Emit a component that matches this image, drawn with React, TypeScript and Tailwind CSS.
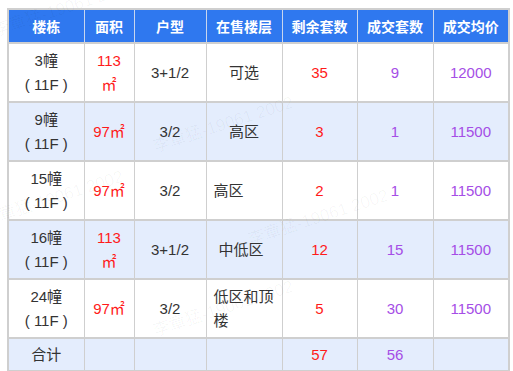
import React from 'react';

type Row = {
  bldg: string;
  area: string[];
  type: string;
  floor: string;
  floorAlign: string;
  left: string;
  deals: string;
  price: string;
  alt: boolean;
};

const rows: Row[] = [
  { bldg: '3幢', area: ['113', '㎡'], type: '3+1/2', floor: '可选', floorAlign: 'text-center', left: '35', deals: '9', price: '12000', alt: false },
  { bldg: '9幢', area: ['97㎡'], type: '3/2', floor: '高区', floorAlign: 'text-center', left: '3', deals: '1', price: '11500', alt: true },
  { bldg: '15幢', area: ['97㎡'], type: '3/2', floor: '高区', floorAlign: 'text-left pl-[7px]', left: '2', deals: '1', price: '11500', alt: false },
  { bldg: '16幢', area: ['113', '㎡'], type: '3+1/2', floor: '中低区', floorAlign: 'text-left pl-[12px]', left: '12', deals: '15', price: '11500', alt: true },
  { bldg: '24幢', area: ['97㎡'], type: '3/2', floor: '低区和顶楼', floorAlign: 'text-left pl-[7px] pr-[4px]', left: '5', deals: '30', price: '11500', alt: false },
];

const headers = ['楼栋', '面积', '户型', '在售楼层', '剩余套数', '成交套数', '成交均价'];
const widths = ['w-[76px]', 'w-[50px]', 'w-[72px]', 'w-[76px]', 'w-[75px]', 'w-[76px]', 'w-[76px]'];

// faint watermark that lies over the table
const marks = [
  'left-[-10px] top-[-4px]',
  'left-[150px] top-[112px]',
  'left-[-20px] top-[186px]',
  'left-[245px] top-[205px]',
  'left-[150px] top-[296px]',
];

export default function App() {
  const cell = 'border-x border-y-2 border-[#cfcfcf] align-middle';
  return (
    <div className="relative w-[513px] h-[371px] bg-white overflow-hidden" style={{ fontFamily: '"Liberation Sans", "Noto Sans CJK SC", sans-serif' }}>
      <div className="pt-[8px] pl-[7px]">
        <table className="table-fixed border-collapse border-2 border-[#cfcfcf] text-[15px] leading-[24px] text-[#333]">
          <colgroup>
            {widths.map((w, i) => (
              <col key={i} className={w} />
            ))}
          </colgroup>
          <thead>
            <tr className="h-[34px] bg-[#2f78ef]">
              {headers.map(h => (
                <th key={h} className="border-x border-[#c9d6ee] text-[14px] font-bold text-white text-center" style={{ fontFamily: '"Noto Sans CJK SC", sans-serif' }}>
                  {h}
                </th>
              ))}
            </tr>
          </thead>
          <tbody>
            {rows.map(r => (
              <tr key={r.bldg} className={r.alt ? 'h-[59px] bg-[#e4edfd]' : 'h-[59px] bg-white'}>
                <td className={`${cell} text-center`}>
                  <div>{r.bldg}</div>
                  <div className="whitespace-pre">( 11F )</div>
                </td>
                <td className={`${cell} text-center text-[#ff1a1a]`}>
                  {r.area.map(a => (
                    <div key={a}>{a}</div>
                  ))}
                </td>
                <td className={`${cell} text-center`}>{r.type}</td>
                <td className={`${cell} ${r.floorAlign}`}>{r.floor}</td>
                <td className={`${cell} text-center text-[#ff1a1a]`}>{r.left}</td>
                <td className={`${cell} text-center text-[#a54ee6]`}>{r.deals}</td>
                <td className={`${cell} text-center text-[#a54ee6]`}>{r.price}</td>
              </tr>
            ))}
            <tr className="h-[33px] bg-[#e4edfd]">
              <td className={`${cell} text-center`}>合计</td>
              <td className={cell}></td>
              <td className={cell}></td>
              <td className={cell}></td>
              <td className={`${cell} text-center text-[#ff1a1a]`}>57</td>
              <td className={`${cell} text-center text-[#a54ee6]`}>56</td>
              <td className={cell}></td>
            </tr>
          </tbody>
        </table>
      </div>
      {marks.map((pos, i) => (
        <div key={i} aria-hidden className={`pointer-events-none select-none absolute ${pos} rotate-[-18deg] text-[17px] text-black/[0.035] whitespace-nowrap`}>
          李章猛-19061 2002
        </div>
      ))}
    </div>
  );
}
